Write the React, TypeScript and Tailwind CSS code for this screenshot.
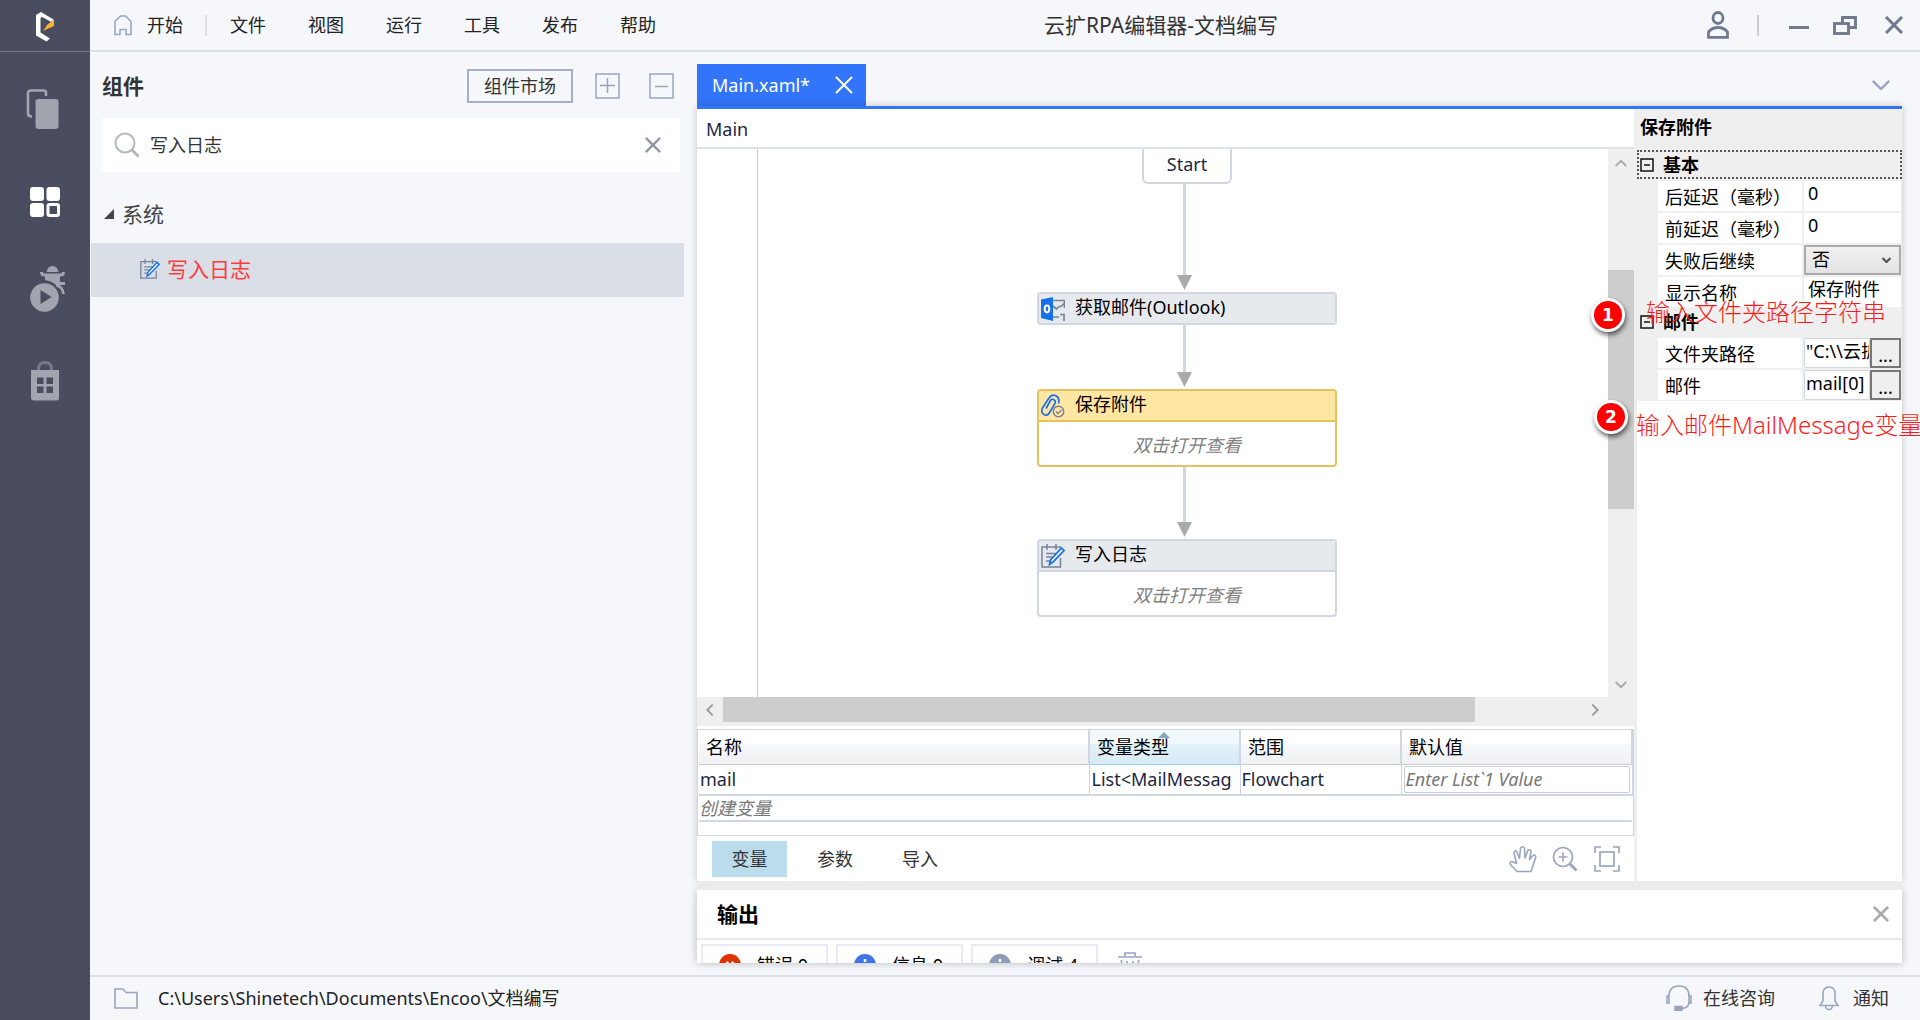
import React from "react";

type IconProps = { className?: string };

function Logo() {
  return (
    <svg className="h-[30px] w-[20px]" viewBox="0 0 20 30" fill="none">
      <path d="M1 3 6 0 18.500 7.500 16.500 10 7 5 5.500 6V20.500L15 26.500 11.500 29.500 1 23.500Z" fill="#fff" />
      <path d="M19 7.500V14L8 19 12.500 12.500Z" fill="#fbb030" />
    </svg>
  );
}

function PagesIcon() {
  return (
    <svg className="h-[40px] w-[34px]" viewBox="0 0 34 40" fill="none">
      <path d="M20 7V4Q20 1.500 17.500 1.500H4.500Q2 1.500 2 4V24.500Q2 27.500 6 27.500" stroke="#a2a5b0" strokeWidth="2.600" />
      <rect x="9.500" y="10" width="23" height="30" rx="3" fill="#a2a5b0" />
    </svg>
  );
}

function BlocksIcon() {
  return (
    <svg className="h-[30px] w-[30px]" viewBox="0 0 30 30" fill="#fff">
      <rect width="14" height="14" rx="3" />
      <rect x="16.500" width="13.500" height="14" rx="3" />
      <rect y="16" width="14" height="14" rx="3" />
      <rect x="18" y="17.500" width="10.500" height="11" rx="1.500" fill="none" stroke="#fff" strokeWidth="3" />
    </svg>
  );
}

function DebugIcon() {
  return (
    <svg className="h-[46px] w-[36px]" viewBox="0 0 36 46" fill="none">
      <path d="M16.500 6Q17.500 0 22.500 0T28.500 6Z" fill="#a2a5b0" />
      <path d="M11.500 6Q11.500 9 14.500 9H30.500Q33.500 9 33.500 6" stroke="#a2a5b0" strokeWidth="3" />
      <path d="M15 10H30V22L27 20Q22 15 15 14Z" fill="#a2a5b0" />
      <path d="M29 17.500H35M26 19Q33 21 33.500 28" stroke="#a2a5b0" strokeWidth="2.800" />
      <circle cx="14.500" cy="31.500" r="15.500" fill="#4a4c5f" />
      <circle cx="14.500" cy="31.500" r="14.300" fill="#a2a5b0" />
      <path d="M10.500 24V38L21.500 31Z" fill="#4a4c5f" />
    </svg>
  );
}

function StoreIcon() {
  return (
    <svg className="h-[40px] w-[28px]" viewBox="0 0 28 40" fill="none">
      <path d="M7.500 10V8Q7.500 1.500 14 1.500T20.500 8V10" stroke="#77798a" strokeWidth="3" />
      <path d="M0 9H28V37Q28 39.500 25 39.500H3Q0 39.500 0 37Z" fill="#a2a5b0" />
      <path d="M6 16.500h6.500V23H6zM15.500 16.500H22V23h-6.500zM6 25.500h6.500V32H6zM15.500 25.500H22V32h-6.500z" fill="#4a4c5f" />
    </svg>
  );
}

function HomeIcon() {
  return (
    <svg className="h-[22px] w-[20px]" viewBox="0 0 20 22" fill="none" stroke="#99a5bf" strokeWidth="1.600">
      <path d="M2 20.500V7.500L7.500 2H12.500L18 7.500V20.500H13V15.500H7V20.500Z" />
    </svg>
  );
}

function SearchIcon() {
  return (
    <svg className="h-[26px] w-[26px]" viewBox="0 0 26 26" fill="none" stroke="#b4b7bd">
      <circle cx="11" cy="11" r="9.500" strokeWidth="2" />
      <path d="m18 18 6.500 6.500" strokeWidth="3" />
    </svg>
  );
}

function CrossIcon({ className }: IconProps) {
  return (
    <svg className={className} viewBox="0 0 18 18" fill="none" stroke="currentColor">
      <path d="M1 1 17 17M17 1 1 17" />
    </svg>
  );
}

function Chevron({ className }: IconProps) {
  return (
    <svg className={className} viewBox="0 0 20 11" fill="none" stroke="currentColor">
      <path d="M1 1 10 10 19 1" />
    </svg>
  );
}

function BoxSign({ plus = false }: { plus?: boolean }) {
  return (
    <svg className="h-[26px] w-[25px]" viewBox="0 0 25 26" fill="none" stroke="#99a5bf" strokeWidth="1.500">
      <rect x="1" y="1" width="23" height="24" />
      <path d={plus ? "M5 12.500H20M12.500 5V20" : "M6 13.500H19"} />
    </svg>
  );
}

function NoteIcon({ className }: IconProps) {
  return (
    <svg className={className} viewBox="0 0 24 24" fill="none" strokeWidth="1.500">
      <g stroke="#78839a">
        <path d="M20 3H1V23H19.500V14M6 0V6M15 0V6M5 9.500H15M5 13H11M5 17H9" />
      </g>
      <path d="M20.500 4 23 6.500 12 18 8.500 20.500 9.500 16Z" stroke="#1670ea" fill="#e7eefb" strokeWidth="1.700" />
    </svg>
  );
}

function OutlookIcon() {
  return (
    <svg className="h-6 w-6" viewBox="0 0 24 24" fill="none">
      <path d="M12 3.500H23.500V11M12 9 15.500 12 18 9.500H20L23.500 6M12 20H18M19 17.500H23V24" stroke="#78839a" strokeWidth="1.700" />
      <path d="M0 2.500 12 0V24L0 21Z" fill="#1670ea" />
      <ellipse cx="6" cy="12" rx="2.300" ry="3.400" stroke="#fff" strokeWidth="2" />
    </svg>
  );
}

function ClipIcon() {
  return (
    <svg className="h-6 w-6" viewBox="0 0 24 24" fill="none">
      <path
        d="M17.500 9.500Q19 4 15 1.800T8 4L1.500 14Q-.5 18.500 3 20.500T8.500 18.500L14 9.500Q15 6.500 12.500 5.500T9 7.500L5 14.500"
        stroke="#1670ea"
        strokeWidth="1.700"
      />
      <circle cx="17.500" cy="17.500" r="5.200" stroke="#78839a" strokeWidth="1.500" />
      <path d="m15 17.500 2 2 3.500-3.500" stroke="#78839a" strokeWidth="1.500" />
    </svg>
  );
}

function HandIcon() {
  return (
    <svg className="h-7 w-7" viewBox="0 0 28 28" fill="none" stroke="#99a5bf" strokeWidth="1.600" strokeLinejoin="round">
      <path d="M8 26.500 1.500 19.500Q0 17 3 16.500L7.500 18.500 5 8Q5 5.500 7.500 6L10.500 13.500 11.500 3Q14 .5 15.500 3L16 13 19 5Q21.500 4 22 6.500L20.500 14.500 24.500 10Q27.500 10 26.500 13L22 26.500Z" />
    </svg>
  );
}

function ZoomIcon() {
  return (
    <svg className="h-[26px] w-[26px]" viewBox="0 0 26 26" fill="none" stroke="#99a5bf" strokeWidth="1.700">
      <circle cx="11" cy="11" r="9.500" />
      <path d="M6.500 11H15.500M11 6.500V15.500" />
      <path d="m18 18 6.500 6.500" strokeWidth="3" />
    </svg>
  );
}

function FitIcon() {
  return (
    <svg className="h-[26px] w-[26px]" viewBox="0 0 26 26" fill="none" stroke="#99a5bf" strokeWidth="1.700">
      <path d="M1 7V1H7M19 1H25V7M25 19V25H19M7 25H1V19" />
      <rect x="6" y="6" width="14" height="14" />
    </svg>
  );
}

function UserIcon() {
  return (
    <svg className="h-7 w-[22px]" viewBox="0 0 22 28" fill="none" stroke="#6f7a8e" strokeWidth="2.800">
      <ellipse cx="11" cy="7" rx="5" ry="5.500" />
      <path d="M1.500 26.300V21Q5 16.500 11 16.500T20.500 21V26.300Z" />
    </svg>
  );
}

function RestoreIcon() {
  return (
    <svg className="h-[19px] w-6" viewBox="0 0 24 19" fill="none" stroke="#6f7a8e" strokeWidth="2.900">
      <path d="M9.500 6V1.500H22.500V11.500H16" />
      <rect x="1.500" y="7.500" width="14" height="10" />
    </svg>
  );
}

function TrashIcon() {
  return (
    <svg className="h-7 w-6" viewBox="0 0 24 28" fill="none" stroke="#99a5bf" strokeWidth="1.700">
      <path d="M0 5H24M7 4V1H17V4M3.500 8V26H20.500V8M9 9V13M12 11V20M15 9V13" />
    </svg>
  );
}

function FolderIcon() {
  return (
    <svg className="h-[21px] w-6" viewBox="0 0 24 21" fill="none" stroke="#99a5bf" strokeWidth="1.600">
      <path d="M1 20V1H9L12 4.500H23V20Z" />
    </svg>
  );
}

function HeadsetIcon() {
  return (
    <svg className="h-[26px] w-[26px]" viewBox="0 0 26 26" fill="none" stroke="#99a5bf" strokeWidth="1.600">
      <path d="M3 11Q3 1 13 1T23 11M23 18Q22 23 16 23.500" />
      <path d="M3 11H1V18H3ZM23 11H25V18H23Z" />
      <path d="M9 21.500H16V25.500H9Z" fill="#99a5bf" />
    </svg>
  );
}

function BellIcon() {
  return (
    <svg className="h-[25px] w-[20px]" viewBox="0 0 20 25" fill="none" stroke="#99a5bf" strokeWidth="1.600">
      <path d="M4 15V8Q4 1 10 1T16 8V15L19 19.500H1ZM6.500 20Q7 23.500 10 23.500T13.500 20" />
    </svg>
  );
}

const menus = ["文件", "视图", "运行", "工具", "发布", "帮助"];

function TopBar() {
  return (
    <header className="relative flex h-[52px] shrink-0 items-center justify-between border-b-2 border-[#d9dfe7] pl-[23px] pr-[17px]">
      <nav className="flex items-center text-[#222]">
        <button className="flex items-center gap-3.5">
          <HomeIcon />
          开始
        </button>
        <span className="ml-[22px] h-[21px] w-0.5 bg-[#dcdfe5]" />
        <div className="ml-[23px] flex gap-[42px]">
          {menus.map((m) => (
            <button key={m}>{m}</button>
          ))}
        </div>
      </nav>
      <h1 className="absolute left-[954px] text-[21px] text-[#333]">云扩RPA编辑器-文档编写</h1>
      <div className="flex items-center text-[#6f7a8e]">
        <button aria-label="用户" className="mr-7">
          <UserIcon />
        </button>
        <span className="h-[21px] w-0.5 bg-[#ccc]" />
        <button aria-label="最小化" className="ml-[30px] mt-1 h-[3px] w-5 bg-[#6f7a8e]" />
        <button aria-label="还原" className="ml-6">
          <RestoreIcon />
        </button>
        <button aria-label="关闭" className="ml-7">
          <CrossIcon className="h-[18px] w-[18px] stroke-3" />
        </button>
      </div>
    </header>
  );
}

function SideRail() {
  return (
    <aside className="w-[90px] shrink-0 bg-[#4a4c5f]">
      <div className="flex h-[52px] items-center justify-center border-b border-[#77798a] pt-0.5">
        <Logo />
      </div>
      <nav className="flex flex-col items-center">
        <button aria-label="项目" className="mt-[37px] mr-1">
          <PagesIcon />
        </button>
        <button aria-label="组件" className="mt-[58px]">
          <BlocksIcon />
        </button>
        <button aria-label="调试" className="mt-[49px] ml-1.5">
          <DebugIcon />
        </button>
        <button aria-label="市场" className="mt-[49px]">
          <StoreIcon />
        </button>
      </nav>
    </aside>
  );
}

function ComponentPanel() {
  return (
    <section className="flex w-[607px] shrink-0 flex-col pr-[13px] pt-[17px]">
      <div className="flex items-center pl-3 pr-2.5">
        <h2 className="flex-1 text-[21px] font-bold text-[#333]">组件</h2>
        <button className="h-[34px] w-[106px] border-2 border-[#a5b0c8] text-[#333]">组件市场</button>
        <button aria-label="展开" className="ml-[22px]">
          <BoxSign plus />
        </button>
        <button aria-label="折叠" className="ml-[29px]">
          <BoxSign />
        </button>
      </div>
      <div className="ml-3 mr-1 mt-[15px] flex h-[54px] items-center bg-white pl-3 pr-[19px]">
        <SearchIcon />
        <input
          aria-label="搜索组件"
          defaultValue="写入日志"
          className="ml-2.5 min-w-0 flex-1 bg-transparent text-[#333] outline-none"
        />
        <button aria-label="清除" className="text-[#8f95a5]">
          <CrossIcon className="h-4 w-4 stroke-[2.5]" />
        </button>
      </div>
      <div className="mt-[25px] flex h-[34px] items-center gap-2 pl-3.5 text-[21px] text-[#444]">
        <svg className="h-2.5 w-2.5" viewBox="0 0 10 10">
          <path d="M10 0V10H0Z" fill="#444" />
        </svg>
        系统
      </div>
      <button className="ml-px mt-3 flex h-[54px] items-center gap-[7px] bg-[#d9dee7] pb-0.5 pl-[49px] text-[21px] text-[#ff3b3b]">
        <NoteIcon className="h-5 w-5" />
        写入日志
      </button>
    </section>
  );
}

function Arrow({ className }: IconProps) {
  return (
    <div className={"absolute left-[480px] flex w-[15px] flex-col items-center " + className}>
      <span className="w-[3px] flex-1 bg-[#d0d7e3]" />
      <svg className="h-[15px] w-[15px]" viewBox="0 0 15 15">
        <path d="M0 0H15L7.500 15Z" fill="#aaa" />
      </svg>
    </div>
  );
}

function FlowNode({
  title,
  icon,
  className,
  body = true,
  active = false,
}: {
  title: string;
  icon: React.ReactNode;
  className: string;
  body?: boolean;
  active?: boolean;
}) {
  const edge = active ? "border-[#e6c25f]" : "border-[#d0d7e3]";
  return (
    <div className={"absolute left-[340px] w-[300px] overflow-hidden rounded border-2 bg-white " + edge + " " + className}>
      <div className={"flex h-[29px] items-center gap-2.5 pl-0.5 text-black " + (active ? "bg-[#ffe6a2]" : "bg-[#e7eaed]")}>
        {icon}
        <span className="pb-1">{title}</span>
      </div>
      {body && (
        <div className={"flex h-[45px] items-center justify-center border-t-2 pt-0.5 text-[#808080] italic " + edge}>双击打开查看</div>
      )}
    </div>
  );
}

function Canvas() {
  return (
    <div className="flex min-h-0 flex-1">
      <div className="relative min-w-0 flex-1 overflow-hidden">
        <div className="absolute left-[60px] h-full w-px bg-[#c3cbdb]" />
        <div className="absolute left-[445px] flex h-[35px] w-[90px] justify-center rounded-b-md border-2 border-t-0 border-[#d0d7e3] pt-[3px] text-[#1f2a44]">
          Start
        </div>
        <Arrow className="top-[35px] h-[106px]" />
        <FlowNode title="获取邮件(Outlook)" icon={<OutlookIcon />} body={false} className="top-[143px]" />
        <Arrow className="top-[176px] h-[62px]" />
        <FlowNode title="保存附件" icon={<ClipIcon />} active className="top-[240px]" />
        <Arrow className="top-[318px] h-[70px]" />
        <FlowNode title="写入日志" icon={<NoteIcon className="h-6 w-6" />} className="top-[390px]" />
      </div>
      <div className="flex w-[26px] shrink-0 flex-col items-center bg-[#efefef] text-[#a6a6a6]">
        <Chevron className="mt-2.5 h-[9px] w-3 rotate-180 stroke-3" />
        <div className="mt-[102px] h-[239px] w-full bg-[#cdcdcd]" />
        <span className="flex-1" />
        <Chevron className="mb-2 h-[9px] w-3 stroke-3" />
      </div>
    </div>
  );
}

function HorizontalBar() {
  return (
    <div className="h-[29px] shrink-0 bg-[#efefef]">
      <div className="flex h-[25px] items-center text-[#999]">
        <Chevron className="mx-[3px] h-5 w-5 rotate-90 p-1 stroke-3" />
        <div className="h-full w-[752px] bg-[#cdcdcd]" />
        <span className="flex-1" />
        <Chevron className="mr-[29px] h-5 w-5 -rotate-90 p-1 stroke-3" />
      </div>
    </div>
  );
}

const th =
  "border-r-2 border-[#d0d7e3] bg-linear-to-b from-white from-40% via-[#f7f8fa] via-41% to-[#f0f1f3] pl-[7px] text-left font-normal text-black";

function VariableTable() {
  return (
    <div className="mt-[3px] h-[107px] shrink-0 border border-[#d0d7e3] pl-px">
      <table className="w-full table-fixed border-collapse text-[#1c2740]">
        <colgroup>
          <col className="w-[390px]" />
          <col className="w-[151px]" />
          <col className="w-[161px]" />
          <col />
        </colgroup>
        <thead>
          <tr className="h-[34px] border-b border-[#ccc]">
            <th className={th}>名称</th>
            <th className="relative border-r-2 border-b border-[#d0d7e3] border-b-[#8fd5f3] bg-linear-to-b from-[#f2f9fd] from-40% via-[#e3f2fa] via-41% to-[#d7eaf5] pl-[7px] text-left font-normal text-black">
              变量类型
              <svg className="absolute left-[68px] top-0.5 h-1.5 w-3" viewBox="0 0 12 6">
                <path d="M6 0 12 6H0Z" fill="#7fa9bd" />
              </svg>
            </th>
            <th className={th}>范围</th>
            <th className={th}>默认值</th>
          </tr>
        </thead>
        <tbody>
          <tr className="h-[31px] border-b-2 border-[#d0d7e3]">
            <td className="border-r border-[#d0d7e3] pl-px">mail</td>
            <td className="overflow-hidden border-r border-[#d0d7e3] pl-0.5 whitespace-nowrap">List&lt;MailMessag</td>
            <td className="border-r border-[#d0d7e3] pl-px">Flowchart</td>
            <td className="border-r border-[#d0d7e3] px-0.5">
              <input
                aria-label="默认值"
                placeholder="Enter List`1 Value"
                className="block h-[27px] w-full rounded-xs border border-[#c5cede] bg-white pl-px italic outline-none placeholder:text-[#777]"
              />
            </td>
          </tr>
          <tr className="h-[26px] border-b-2 border-[#d0d7e3]">
            <td colSpan={4} className="leading-[22px] text-[#777] italic">
              创建变量
            </td>
          </tr>
        </tbody>
      </table>
    </div>
  );
}

function DesignerTabs() {
  return (
    <div className="flex h-[45px] shrink-0 items-center pl-[15px] pr-3.5 text-[#333]">
      <button className="h-9 w-[75px] bg-[#bbdcec]">变量</button>
      <button className="ml-[30px]">参数</button>
      <button className="ml-[49px] flex-1 text-left">导入</button>
      <button aria-label="拖动">
        <HandIcon />
      </button>
      <button aria-label="缩放" className="ml-[15px]">
        <ZoomIcon />
      </button>
      <button aria-label="适应屏幕" className="ml-4">
        <FitIcon />
      </button>
    </div>
  );
}

function Category({ title, focus = false }: { title: string; focus?: boolean }) {
  return (
    <div
      className={
        "ml-[3px] flex h-[29px] items-center gap-[9px] border-2 pl-px text-black " +
        (focus ? "border-dotted border-[#555]" : "border-transparent")
      }
    >
      <svg className="h-3.5 w-3.5" viewBox="0 0 14 14" fill="none" stroke="#111">
        <rect x="1" y="1" width="12" height="12" strokeWidth="1.500" />
        <path d="M4 7H10" strokeWidth="1.500" />
      </svg>
      <h3 className="font-bold">{title}</h3>
    </div>
  );
}

function Property({ label, id, children }: { label: string; id: string; children: React.ReactNode }) {
  return (
    <div className="ml-6 mr-px mt-0.5 flex h-[30px] gap-0.5">
      <label htmlFor={id} className="flex w-[144px] shrink-0 items-center bg-white pl-[7px] pt-px whitespace-nowrap text-black">
        {label}
      </label>
      <div className="flex min-w-0 flex-1 bg-white">{children}</div>
    </div>
  );
}

const plainValue = "w-full min-w-0 bg-transparent pl-1 pb-1.5 text-black outline-none";
const boxedValue = "min-w-0 flex-1 rounded-xs border border-[#d0d7e3] bg-white pl-px pb-1 text-black outline-none";
const moreButton = "w-[31px] shrink-0 border-2 border-[#777] bg-[#efefef] pt-1 leading-5 text-black";

function Note({ n, text, className, textClass }: { n: number; text: string; className: string; textClass: string }) {
  return (
    <div className={"pointer-events-none absolute flex items-center " + className}>
      <span className="flex h-[34px] w-[34px] shrink-0 items-center justify-center rounded-full border-3 border-white bg-[#f00] font-['DejaVu_Sans',sans-serif] text-[17px] font-bold text-white shadow-[1px_3px_5px_rgba(0,0,0,0.6)]">
        {n}
      </span>
      <span className={"text-2xl font-light whitespace-nowrap text-[#ff1a1a] " + textClass}>{text}</span>
    </div>
  );
}

function PropertyPanel() {
  return (
    <section className="relative w-[268px] shrink-0 border-l-[3px] border-[#efefef] bg-white">
      <div className="-ml-[3px] bg-[#efefef] pb-px">
        <h2 className="flex h-[41px] items-center pb-1.5 pl-1.5 font-bold text-black">保存附件</h2>
        <Category title="基本" focus />
        <Property label="后延迟（毫秒）" id="delay-after">
          <input id="delay-after" defaultValue="0" className={plainValue} />
        </Property>
        <Property label="前延迟（毫秒）" id="delay-before">
          <input id="delay-before" defaultValue="0" className={plainValue} />
        </Property>
        <Property label="失败后继续" id="go-on">
          <div className="relative flex w-full">
            <select
              id="go-on"
              className="w-full appearance-none border-2 border-[#aaa] bg-linear-to-b from-[#f0f0f0] to-[#e4e4e4] pb-0.5 pl-1.5 text-black"
            >
              <option>否</option>
            </select>
            <Chevron className="pointer-events-none absolute right-2.5 top-3 h-1.5 w-[9px] stroke-5 text-[#555]" />
          </div>
        </Property>
        <Property label="显示名称" id="display-name">
          <input id="display-name" defaultValue="保存附件" className={plainValue} />
        </Property>
        <Category title="邮件" />
        <Property label="文件夹路径" id="folder">
          <input id="folder" defaultValue={'"C:\\\\云扩'} className={boxedValue} />
          <button aria-label="编辑文件夹路径" className={moreButton}>
            ...
          </button>
        </Property>
        <Property label="邮件" id="mail">
          <input id="mail" defaultValue="mail[0]" className={boxedValue} />
          <button aria-label="编辑邮件" className={moreButton}>
            ...
          </button>
        </Property>
      </div>
      <Note n={1} text="输入文件夹路径字符串" className="-left-[46px] top-[189px]" textClass="ml-[21px] -mt-1.5" />
      <Note n={2} text="输入邮件MailMessage变量" className="-left-[43px] top-[284px]" textClass="ml-2 mt-4" />
    </section>
  );
}

const filters = [
  { label: "错误 0", color: "bg-[#e03400]", mark: "M7.500 8 14.500 15M14.500 8 7.500 15" },
  { label: "信息 0", color: "bg-[#3f74e6]", mark: "M11 5V8M11 10V17" },
  { label: "调试 4", color: "bg-[#8f9cb8]", mark: "M11 5V8M11 10V17" },
];

function OutputPanel() {
  return (
    <section className="h-[73px] shrink-0 overflow-hidden bg-white shadow-[0_0_8px_rgba(0,0,0,0.25)]">
      <div className="flex h-[50px] items-center justify-between border-b-2 border-[#e6eaf4] pl-5 pr-[13px]">
        <h2 className="text-[21px] font-bold text-black">输出</h2>
        <button aria-label="关闭输出" className="text-[#aaa]">
          <CrossIcon className="h-4 w-4 stroke-3" />
        </button>
      </div>
      <div className="flex items-start gap-2 pl-1 pt-1">
        {filters.map((f) => (
          <button key={f.label} className="flex h-[42px] w-[127px] items-center border-2 border-[#e6eaf4] pl-4 text-black">
            <svg className={"mr-4 h-[22px] w-[22px] rounded-full " + f.color} viewBox="0 0 22 22" stroke="#fff" strokeWidth="2.500">
              <path d={f.mark} />
            </svg>
            {f.label}
          </button>
        ))}
        <button aria-label="清空" className="ml-3 mt-2">
          <TrashIcon />
        </button>
      </div>
    </section>
  );
}

function StatusBar() {
  return (
    <footer className="flex h-[45px] shrink-0 items-center border-t-2 border-[#dde1e7] pb-px pl-6 pr-[31px] text-[#333]">
      <FolderIcon />
      <span className="ml-5 flex-1 text-[#222]">C:\Users\Shinetech\Documents\Encoo\文档编写</span>
      <button className="flex items-center gap-[11px]">
        <HeadsetIcon />
        在线咨询
      </button>
      <button className="ml-11 flex items-center gap-3.5">
        <BellIcon />
        通知
      </button>
    </footer>
  );
}

export default function App() {
  return (
    <div className="flex h-screen overflow-hidden bg-[#f5f7fb] font-['Noto_Sans','Noto_Sans_CJK_SC',sans-serif] text-[18px] leading-6">
      <SideRail />
      <div className="flex min-w-0 flex-1 flex-col">
        <TopBar />
        <div className="flex min-h-0 flex-1">
          <ComponentPanel />
          <main className="flex min-w-0 flex-1 flex-col pb-3 pr-[18px] pt-3">
            <div className="flex h-[42px] shrink-0 items-center justify-between">
              <div className="flex h-full w-[169px] items-center justify-between bg-[#3275fa] pl-[15px] pr-[13px] text-white">
                <span>Main.xaml*</span>
                <button aria-label="关闭标签">
                  <CrossIcon className="h-[18px] w-[18px] stroke-2" />
                </button>
              </div>
              <button aria-label="更多标签" className="mr-[11px] text-[#99a5bf]">
                <Chevron className="h-2.5 w-5 stroke-[2.5]" />
              </button>
            </div>
            <div className="flex min-h-0 flex-1 border-t-[3px] border-[#3275fa] bg-white shadow-[0_0_8px_rgba(0,0,0,0.2)]">
              <section className="flex min-w-0 flex-1 flex-col">
                <div className="flex h-10 shrink-0 items-center border-b-2 border-[#dde2ea] pl-[9px] pt-0.5 text-[#1c2740]">Main</div>
                <Canvas />
                <HorizontalBar />
                <VariableTable />
                <DesignerTabs />
              </section>
              <PropertyPanel />
            </div>
            <div className="relative h-[9px] shrink-0 bg-[#ebebeb]" />
            <OutputPanel />
          </main>
        </div>
        <StatusBar />
      </div>
    </div>
  );
}
